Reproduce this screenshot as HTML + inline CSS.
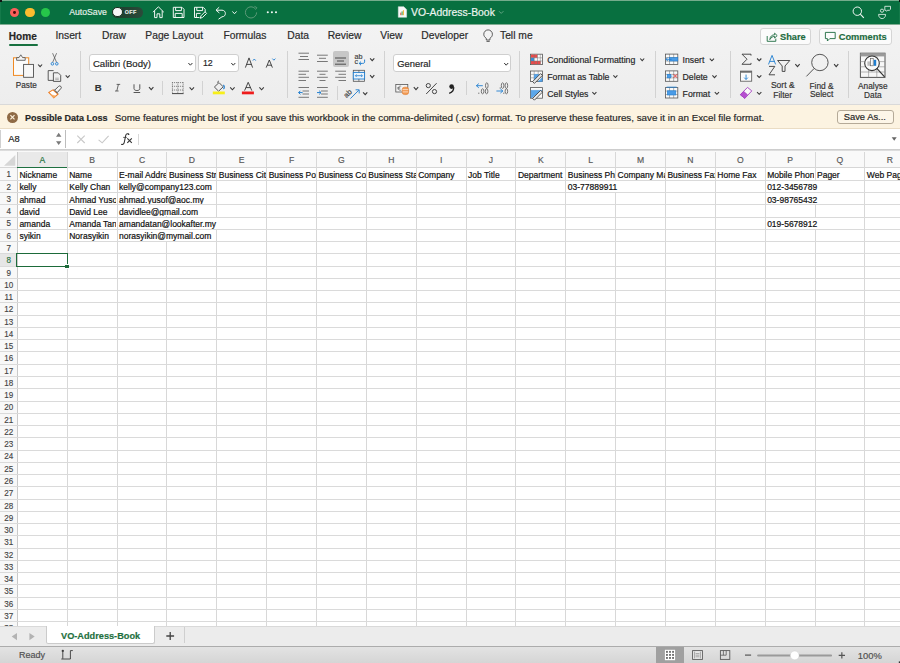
<!DOCTYPE html><html><head><meta charset="utf-8"><style>
*{margin:0;padding:0;box-sizing:border-box}
html,body{width:900px;height:663px;overflow:hidden;background:#fff;font-family:"Liberation Sans",sans-serif}
.a{position:absolute}
.t{position:absolute;white-space:nowrap;line-height:1;-webkit-text-stroke:0.18px currentColor}
svg{position:absolute;overflow:visible}
.cs{display:inline-block;vertical-align:top;background:#fff;height:11.06px;padding-top:2.5px;padding-right:1px;-webkit-text-stroke:0.2px #111}
</style></head><body>

<div class="a" style="left:0;top:0;width:900px;height:24px;background:#087040"></div>
<div class="a" style="left:0;top:24px;width:900px;height:1px;background:#80ac92"></div>
<div class="a" style="left:0;top:0;width:900px;height:1px;background:#74ac8c"></div>
<div class="a" style="left:0;top:1px;width:1px;height:23px;background:#147a4a"></div>
<div class="a" style="left:899px;top:1px;width:1px;height:23px;background:#147a4a"></div>
<div class="a" style="left:0;top:0;width:1.5px;height:1.5px;background:#111"></div>
<div class="a" style="left:898.5px;top:0;width:1.5px;height:1.5px;background:#111"></div>
<div class="a" style="left:9.8px;top:7.550000000000001px;width:9.7px;height:9.7px;border-radius:50%;background:#fc5f5a"></div>
<div class="a" style="left:25.049999999999997px;top:7.550000000000001px;width:9.7px;height:9.7px;border-radius:50%;background:#fdbc2f"></div>
<div class="a" style="left:40.65px;top:7.550000000000001px;width:9.7px;height:9.7px;border-radius:50%;background:#26c64a"></div>
<div class="a" style="left:13.2px;top:11px;width:2.8px;height:2.8px;border-radius:50%;background:#4a0a0a"></div>
<div class="a" style="left:0;top:25px;width:900px;height:79px;background:linear-gradient(#f3f3f3,#ededed)"></div>
<div class="a" style="left:0;top:103.5px;width:900px;height:1px;background:#d9d9d9"></div>
<div class="t" style="left:69.2px;top:8.14px;font-size:8.7px;color:#e3eee7;font-weight:normal;">AutoSave</div>
<div class="a" style="left:112.3px;top:7.2px;width:30.5px;height:10.5px;border-radius:5.25px;background:linear-gradient(90deg,#1a3d2b,#2b4a3a);"></div>
<div class="a" style="left:112.4px;top:7.3px;width:10.2px;height:10.2px;border-radius:50%;background:#f6f6f6;border:0.7px solid #15301f"></div>
<div class="t" style="left:124.8px;top:10.41px;font-size:5.3px;color:#e6ece8;font-weight:bold;letter-spacing:0.45px">OFF</div>
<div class="t" style="left:411.1px;top:7.50px;font-size:10.4px;color:#eef5f0;font-weight:normal;">VO-Address-Book</div>
<div class="t" style="left:8.8px;top:31.65px;font-size:10.1px;color:#262626;font-weight:bold;">Home</div>
<div class="a" style="left:8.8px;top:43.9px;width:28.9px;height:2px;background:#187140;border-radius:1px"></div>
<div class="t" style="left:55.4px;top:31.48px;font-size:10.3px;color:#2a2a2a;font-weight:normal;">Insert</div>
<div class="t" style="left:102px;top:31.48px;font-size:10.3px;color:#2a2a2a;font-weight:normal;">Draw</div>
<div class="t" style="left:145.3px;top:31.48px;font-size:10.3px;color:#2a2a2a;font-weight:normal;">Page Layout</div>
<div class="t" style="left:223.4px;top:31.48px;font-size:10.3px;color:#2a2a2a;font-weight:normal;">Formulas</div>
<div class="t" style="left:287.3px;top:31.48px;font-size:10.3px;color:#2a2a2a;font-weight:normal;">Data</div>
<div class="t" style="left:327.7px;top:31.48px;font-size:10.3px;color:#2a2a2a;font-weight:normal;">Review</div>
<div class="t" style="left:380.3px;top:31.48px;font-size:10.3px;color:#2a2a2a;font-weight:normal;">View</div>
<div class="t" style="left:421.3px;top:31.48px;font-size:10.3px;color:#2a2a2a;font-weight:normal;">Developer</div>
<div class="t" style="left:500px;top:31.48px;font-size:10.3px;color:#2a2a2a;font-weight:normal;">Tell me</div>
<div class="a" style="left:760.4px;top:27.9px;width:50.2px;height:17.5px;background:#fbfbfb;border:0.7px solid #d5d5d5;border-radius:3px"></div>
<div class="a" style="left:819px;top:27.9px;width:73px;height:17.5px;background:#fbfbfb;border:0.7px solid #d5d5d5;border-radius:3px"></div>
<div class="t" style="left:780px;top:33.37px;font-size:9.25px;color:#1d6b40;font-weight:bold;">Share</div>
<div class="t" style="left:838.7px;top:33.33px;font-size:9.3px;color:#1d6b40;font-weight:bold;">Comments</div>
<div class="t" style="left:15.8px;top:82.26px;font-size:8.2px;color:#333;font-weight:normal;">Paste</div>
<div class="a" style="left:80.2px;top:51px;width:1px;height:47px;background:#d2d2d2"></div>
<div class="a" style="left:88.6px;top:54.4px;width:107.4px;height:18px;background:#fff;border:0.7px solid #cfcfcf;border-radius:3px"></div>
<div class="a" style="left:198.4px;top:54.4px;width:40.6px;height:18px;background:#fff;border:0.7px solid #cfcfcf;border-radius:3px"></div>
<div class="t" style="left:92.9px;top:58.57px;font-size:9.6px;color:#262626;font-weight:normal;">Calibri (Body)</div>
<div class="t" style="left:202.9px;top:59.25px;font-size:8.8px;color:#262626;font-weight:normal;">12</div>
<div class="t" style="left:94.7px;top:82.97px;font-size:9.6px;color:#333;font-weight:bold;">B</div>
<div class="a" style="left:162.0px;top:81px;width:1px;height:14px;background:#d2d2d2"></div>
<div class="a" style="left:202.3px;top:81px;width:1px;height:14px;background:#d2d2d2"></div>
<div class="a" style="left:286.9px;top:51px;width:1px;height:47px;background:#d2d2d2"></div>
<div class="a" style="left:332.5px;top:51px;width:16.3px;height:15.7px;background:#c7c7c7;border-radius:2px"></div>
<div class="t" style="left:354.4px;top:52.71px;font-size:7.2px;color:#444;font-weight:normal;">ab</div>
<div class="t" style="left:354.4px;top:58.31px;font-size:7.2px;color:#444;font-weight:normal;">c</div>
<div class="a" style="left:337.0px;top:86px;width:1px;height:14px;background:#d2d2d2"></div>
<div class="t" style="left:345.6px;top:90.94px;font-size:7.4px;color:#444;font-weight:normal;transform:rotate(-45deg);transform-origin:20% 80%">ab</div>
<div class="a" style="left:384.0px;top:51px;width:1px;height:47px;background:#d2d2d2"></div>
<div class="a" style="left:393.3px;top:54.3px;width:118.2px;height:18.2px;background:#fff;border:0.7px solid #cfcfcf;border-radius:3px"></div>
<div class="t" style="left:397.3px;top:58.84px;font-size:9.4px;color:#262626;font-weight:normal;">General</div>
<div class="a" style="left:466.1px;top:81px;width:1px;height:14px;background:#d2d2d2"></div>
<div class="a" style="left:519.4px;top:51px;width:1px;height:47px;background:#d2d2d2"></div>
<div class="t" style="left:547.3px;top:55.89px;font-size:8.75px;color:#262626;font-weight:normal;">Conditional Formatting</div>
<div class="t" style="left:547.3px;top:72.74px;font-size:8.7px;color:#262626;font-weight:normal;">Format as Table</div>
<div class="t" style="left:547.3px;top:89.54px;font-size:8.7px;color:#262626;font-weight:normal;">Cell Styles</div>
<div class="a" style="left:655.1px;top:51px;width:1px;height:47px;background:#d2d2d2"></div>
<div class="t" style="left:682.6px;top:55.94px;font-size:8.7px;color:#262626;font-weight:normal;">Insert</div>
<div class="t" style="left:682.6px;top:72.74px;font-size:8.7px;color:#262626;font-weight:normal;">Delete</div>
<div class="t" style="left:682.6px;top:89.54px;font-size:8.7px;color:#262626;font-weight:normal;">Format</div>
<div class="a" style="left:729.9px;top:51px;width:1px;height:47px;background:#d2d2d2"></div>
<div class="t" style="left:742.75px;width:80px;text-align:center;top:81.40px;font-size:8.5px;color:#333;font-weight:normal">Sort &amp;</div>
<div class="t" style="left:742.65px;width:80px;text-align:center;top:90.70px;font-size:8.5px;color:#333;font-weight:normal">Filter</div>
<div class="t" style="left:781.60px;width:80px;text-align:center;top:81.69px;font-size:8.4px;color:#333;font-weight:normal">Find &amp;</div>
<div class="t" style="left:781.60px;width:80px;text-align:center;top:90.49px;font-size:8.4px;color:#333;font-weight:normal">Select</div>
<div class="a" style="left:848.0px;top:51px;width:1px;height:47px;background:#d2d2d2"></div>
<div class="t" style="left:832.80px;width:80px;text-align:center;top:81.77px;font-size:8.3px;color:#333;font-weight:normal">Analyse</div>
<div class="t" style="left:832.80px;width:80px;text-align:center;top:90.57px;font-size:8.3px;color:#333;font-weight:normal">Data</div>
<svg width="900" height="663" style="left:0;top:0"><path d="M153,12.2 L158.4,6.8 L163.8,12.2 M154.6,10.8 V17.6 H157 V13.8 H159.8 V17.6 H162.2 V10.8" stroke="#f2f7f4" stroke-width="1.0" fill="none" /><path d="M173.3,7.3 H182 L184,9.3 V17.5 H173.3 Z M175.6,7.3 V10.6 H181.4 V7.3 M175.2,17.5 V13.4 H182.2 V17.5" stroke="#f2f7f4" stroke-width="1.0" fill="none" /><path d="M194.5,7.3 H203.2 L205.2,9.3 V12 M194.5,7.3 V17.5 H199.5 M196.8,7.3 V10.6 H202.6 V7.3 M196.4,17.5 V13.4 H200.6" stroke="#f2f7f4" stroke-width="1.0" fill="none" /><path d="M200.2,18.3 L201,15.8 L205,11.8 L206.6,13.4 L202.6,17.4 Z" stroke="#f2f7f4" stroke-width="1.0" fill="none" /><path d="M219.2,7.2 L216,10.2 L219.4,13 M216.2,10.2 H222 C226.5,10.2 226.5,16.8 222,16.8 L218.5,19.2" stroke="#f2f7f4" stroke-width="1.0" fill="none" /><path d="M232.40,11.45 L234.50,13.75 L236.60,11.45" stroke="#f2f7f4" stroke-width="1.0" fill="none" /><circle cx="251" cy="12.4" r="5.6" stroke="#5c9a78" stroke-width="1" fill="none" stroke-dasharray="30 6"/><path d="M254.5,6.4 L256.8,7.6 L255.5,9.6" stroke="#5c9a78" stroke-width="1.0" fill="none" /><circle cx="267.8" cy="12.3" r="1.05" fill="#f2f7f4"/><circle cx="271.9" cy="12.3" r="1.05" fill="#f2f7f4"/><circle cx="276" cy="12.3" r="1.05" fill="#f2f7f4"/><path d="M398.3,6.7 H403.8 L406.6,9.5 V17.3 H398.3 Z" stroke="#e8e8e8" stroke-width="0.5" fill="#f8f8f8" /><rect x="400.3" y="12.6" width="1" height="2.6" fill="#e14b3b"/><rect x="401.6" y="11.4" width="1" height="3.8" fill="#2f9a4f"/><rect x="402.9" y="10.2" width="1" height="5" fill="#f2b42f"/><path d="M499.00,11.20 L501.20,13.40 L503.40,11.20" stroke="#6aa887" stroke-width="0.9" fill="none" /><circle cx="857.3" cy="11.2" r="4.2" stroke="#f2f7f4" stroke-width="1" fill="none"/><line x1="860.3" y1="14.2" x2="863.8" y2="17.8" stroke="#f2f7f4" stroke-width="1.1"/><circle cx="882" cy="10.7" r="1.6" stroke="#f2f7f4" stroke-width="0.8" fill="none"/><path d="M878.6,14.4 H885.6 C885.6,17.4 883.6,18.6 882.1,18.6 C880.6,18.6 878.6,17.4 878.6,14.4 Z" stroke="#f2f7f4" stroke-width="0.8" fill="none" /><path d="M884.8,6.3 H890.5 V9.3 L889.4,10.3 H887.3 L886.6,11.3 L885.9,10.3 H884.8 Z" stroke="#f2f7f4" stroke-width="0.8" fill="none" /><path d="M486.3,38.4 C484.3,37 483.8,35.6 483.8,34.2 A4.3,4.3 0 0 1 492.4,34.2 C492.4,35.6 491.9,37 489.9,38.4 V40 H486.3 Z M486.5,41.4 H489.7" stroke="#4a4a4a" stroke-width="0.9" fill="none" /><path d="M767.2,36 V41.3 H775.8 V38.6 M769.8,39.6 C770.2,36.2 772,34.8 774.6,34.8 V33.2 L777.2,35.6 L774.6,38 V36.4 C772.6,36.4 771.2,37.4 769.8,39.6 Z" stroke="#1d6b40" stroke-width="0.9" fill="none" /><path d="M825.4,32.4 H835.2 V38.6 H829.8 L827.4,41 V38.6 H825.4 Z" stroke="#1d6b40" stroke-width="0.9" fill="none" /><rect x="13.5" y="57.8" width="15.2" height="17.6" fill="#fbfbfb" stroke="#f08a24" stroke-width="1.0" rx="0"/><path d="M16.6,60.3 V57.6 H19 L20.8,54.8 L22.6,57.6 H25.2 V60.3 Z" stroke="#4a4a4a" stroke-width="0.8" fill="#f5f5f5" /><rect x="23.6" y="64.4" width="9.9" height="12.9" fill="#f7f7f7" stroke="#505050" stroke-width="0.9" rx="0"/><path d="M38.10,64.50 L40.10,66.70 L42.10,64.50" stroke="#3a3a3a" stroke-width="1.1" fill="none" /><path d="M52.6,53.2 L56.5,62.2 M56.6,53.2 L52.7,62.2" stroke="#4a4a4a" stroke-width="0.7" fill="none" /><circle cx="52.4" cy="63.8" r="1.3" stroke="#1f7ed0" stroke-width="0.9" fill="none"/><circle cx="56.8" cy="63.8" r="1.3" stroke="#1f7ed0" stroke-width="0.9" fill="none"/><path d="M53.5,80.4 H48.2 V70.6 H53.6" stroke="#4a4a4a" stroke-width="0.9" fill="none" /><path d="M53.4,72.8 H58.2 L60.7,75.3 V81.4 H53.4 Z" stroke="#4a4a4a" stroke-width="0.9" fill="none" /><line x1="55.2" y1="78.2" x2="58.8" y2="78.2" stroke="#9a9a9a" stroke-width="0.7"/><line x1="55.2" y1="79.6" x2="58.8" y2="79.6" stroke="#9a9a9a" stroke-width="0.7"/><path d="M65.70,75.30 L67.70,77.50 L69.70,75.30" stroke="#3a3a3a" stroke-width="1.1" fill="none" /><path d="M48.8,92.4 L53,89.9 L57.9,94.2 L53.8,97.8 Z" stroke="#ef7d22" stroke-width="1.1" fill="#fff" /><path d="M50.6,94.6 L55.8,96 L53.8,97.8 Z" stroke="#f6a860" stroke-width="0.5" fill="#f6a860" /><path d="M54.2,89.6 L58.2,93.8" stroke="#333" stroke-width="1.0" fill="none" stroke-dasharray="1 0.8"/><path d="M54.6,90.2 L58.6,86.4 A1.5,1.5 0 0 1 60.8,88.6 L57.2,92.6 Z" stroke="#444" stroke-width="0.9" fill="#f4f4f4" /><path d="M188.40,63.00 L190.40,65.20 L192.40,63.00" stroke="#333" stroke-width="1.0" fill="none" /><path d="M231.30,63.00 L233.30,65.20 L235.30,63.00" stroke="#333" stroke-width="1.0" fill="none" /><path d="M245.4,67.6 L249,57.9 L252.6,67.6 M246.6,64.4 H251.4" stroke="#333" stroke-width="0.9" fill="none" /><path d="M252.9,60.6 L254.3,59 L255.7,60.6" stroke="#1f7ed0" stroke-width="0.9" fill="none" /><path d="M266.2,67.6 L269.3,60 L272.4,67.6 M267.2,65.2 H271.4" stroke="#333" stroke-width="0.9" fill="none" /><path d="M272.4,58.6 L273.9,60.2 L275.4,58.6" stroke="#1f7ed0" stroke-width="0.9" fill="none" /><path d="M116.6,84.4 H120.2 M115,91 H118.6 M118.4,84.4 L116.8,91" stroke="#444" stroke-width="0.8" fill="none" /><path d="M134,84.3 V88.6 C134,91.2 139.8,91.2 139.8,88.6 V84.3 M133.6,92.5 H140.2" stroke="#444" stroke-width="0.9" fill="none" /><path d="M149.00,87.20 L151.20,89.60 L153.40,87.20" stroke="#3a3a3a" stroke-width="1.1" fill="none" /><line x1="172" y1="82.6" x2="183.6" y2="82.6" stroke="#666" stroke-width="0.8" stroke-dasharray="1.1 0.9"/><line x1="172" y1="86.3" x2="183.6" y2="86.3" stroke="#666" stroke-width="0.8" stroke-dasharray="1.1 0.9"/><line x1="172" y1="90" x2="183.6" y2="90" stroke="#666" stroke-width="0.8" stroke-dasharray="1.1 0.9"/><line x1="172.4" y1="82.3" x2="172.4" y2="93" stroke="#666" stroke-width="0.8" stroke-dasharray="1.1 0.9"/><line x1="177.8" y1="82.3" x2="177.8" y2="93" stroke="#666" stroke-width="0.8" stroke-dasharray="1.1 0.9"/><line x1="183.2" y1="82.3" x2="183.2" y2="93" stroke="#666" stroke-width="0.8" stroke-dasharray="1.1 0.9"/><line x1="172" y1="93.6" x2="183.6" y2="93.6" stroke="#444" stroke-width="1.0"/><path d="M189.60,87.40 L191.80,89.80 L194.00,87.40" stroke="#3a3a3a" stroke-width="1.1" fill="none" /><path d="M214.4,87 L219,82.6 L223.2,86.8 L218.6,91.2 Z" stroke="#444" stroke-width="0.9" fill="none" /><path d="M217,82.6 L219,80.8" stroke="#444" stroke-width="0.8" fill="none" /><path d="M223.4,84.8 C224.6,86 224.6,88 223.4,89" stroke="#1f7ed0" stroke-width="1.2" fill="none" /><rect x="212.8" y="91.5" width="12" height="2.8" fill="#f7ef1a" stroke="none" stroke-width="0.9" rx="0"/><path d="M230.20,87.40 L232.40,89.80 L234.60,87.40" stroke="#3a3a3a" stroke-width="1.1" fill="none" /><path d="M244.6,90.6 L248.2,82.3 L251.8,90.6 M245.9,87.6 H250.5" stroke="#333" stroke-width="0.9" fill="none" /><rect x="241.9" y="91.5" width="12" height="2.8" fill="#ee1c1c" stroke="none" stroke-width="0.9" rx="0"/><path d="M259.40,87.40 L261.60,89.80 L263.80,87.40" stroke="#3a3a3a" stroke-width="1.1" fill="none" /><line x1="298.5" y1="53.2" x2="309" y2="53.2" stroke="#505050" stroke-width="0.75"/><line x1="300" y1="56.5" x2="308" y2="56.5" stroke="#505050" stroke-width="0.75"/><line x1="298.5" y1="59.5" x2="309" y2="59.5" stroke="#505050" stroke-width="0.75"/><line x1="317" y1="55.2" x2="327.8" y2="55.2" stroke="#505050" stroke-width="0.75"/><line x1="319" y1="58.3" x2="326" y2="58.3" stroke="#505050" stroke-width="0.75"/><line x1="317" y1="61.5" x2="327.8" y2="61.5" stroke="#505050" stroke-width="0.75"/><line x1="335" y1="58" x2="346" y2="58" stroke="#3d3d3d" stroke-width="0.9"/><line x1="337" y1="61" x2="344" y2="61" stroke="#3d3d3d" stroke-width="0.9"/><line x1="335" y1="64.2" x2="346" y2="64.2" stroke="#3d3d3d" stroke-width="0.9"/><path d="M364.6,59.6 V61.8 C364.6,63 363.8,63.4 362.6,63.4 H359.2 M361,61.6 L359.2,63.4 L361,65.2" stroke="#1f7ed0" stroke-width="1.0" fill="none" /><path d="M370.10,58.30 L372.20,60.70 L374.30,58.30" stroke="#3a3a3a" stroke-width="1.1" fill="none" /><line x1="298.5" y1="71.2" x2="309" y2="71.2" stroke="#505050" stroke-width="0.75"/><line x1="298.5" y1="74.3" x2="306" y2="74.3" stroke="#505050" stroke-width="0.75"/><line x1="298.5" y1="77.3" x2="309" y2="77.3" stroke="#505050" stroke-width="0.75"/><line x1="298.5" y1="80.5" x2="306" y2="80.5" stroke="#505050" stroke-width="0.75"/><line x1="317" y1="71.2" x2="327.8" y2="71.2" stroke="#505050" stroke-width="0.75"/><line x1="319.5" y1="74.3" x2="325.5" y2="74.3" stroke="#505050" stroke-width="0.75"/><line x1="317" y1="77.3" x2="327.8" y2="77.3" stroke="#505050" stroke-width="0.75"/><line x1="319.5" y1="80.5" x2="325.5" y2="80.5" stroke="#505050" stroke-width="0.75"/><line x1="335.2" y1="71.2" x2="346" y2="71.2" stroke="#505050" stroke-width="0.75"/><line x1="338.5" y1="74.3" x2="346" y2="74.3" stroke="#505050" stroke-width="0.75"/><line x1="335.2" y1="77.3" x2="346" y2="77.3" stroke="#505050" stroke-width="0.75"/><line x1="338.5" y1="80.5" x2="346" y2="80.5" stroke="#505050" stroke-width="0.75"/><rect x="353.3" y="70.3" width="11.3" height="11" fill="none" stroke="#555" stroke-width="0.8" rx="0"/><rect x="353.3" y="72.4" width="11.3" height="6.6" fill="#eaf3fb" stroke="#1f7ed0" stroke-width="0.9" rx="0"/><line x1="358.9" y1="70.3" x2="358.9" y2="72.4" stroke="#555" stroke-width="0.7"/><line x1="358.9" y1="79" x2="358.9" y2="81.3" stroke="#555" stroke-width="0.7"/><path d="M355.4,75.7 H362.4 M356.6,74.5 L355.4,75.7 L356.6,76.9 M361.2,74.5 L362.4,75.7 L361.2,76.9" stroke="#1f7ed0" stroke-width="0.8" fill="none" /><path d="M370.10,75.20 L372.20,77.60 L374.30,75.20" stroke="#3a3a3a" stroke-width="1.1" fill="none" /><line x1="298.5" y1="87.5" x2="309" y2="87.5" stroke="#505050" stroke-width="0.75"/><line x1="302.5" y1="91" x2="309" y2="91" stroke="#505050" stroke-width="0.75"/><line x1="302.5" y1="94" x2="309" y2="94" stroke="#505050" stroke-width="0.75"/><line x1="298.5" y1="97.3" x2="309" y2="97.3" stroke="#505050" stroke-width="0.75"/><path d="M298.6,92.6 H302.6 M300.4,90.8 L298.6,92.6 L300.4,94.4" stroke="#1f7ed0" stroke-width="1.0" fill="none" /><line x1="317" y1="87.5" x2="327.8" y2="87.5" stroke="#505050" stroke-width="0.75"/><line x1="321" y1="91" x2="327.8" y2="91" stroke="#505050" stroke-width="0.75"/><line x1="321" y1="94" x2="327.8" y2="94" stroke="#505050" stroke-width="0.75"/><line x1="317" y1="97.3" x2="327.8" y2="97.3" stroke="#505050" stroke-width="0.75"/><path d="M317,92.6 H321 M319.2,90.8 L321,92.6 L319.2,94.4" stroke="#1f7ed0" stroke-width="1.0" fill="none" /><path d="M350.4,98.6 L358.8,90.2 M355.6,89.8 H359.2 V93.4" stroke="#1f7ed0" stroke-width="0.9" fill="none" /><path d="M363.10,92.30 L365.20,94.70 L367.30,92.30" stroke="#3a3a3a" stroke-width="1.1" fill="none" /><path d="M504.20,63.00 L506.20,65.20 L508.20,63.00" stroke="#333" stroke-width="1.0" fill="none" /><rect x="395.8" y="84.4" width="12" height="7.6" fill="#f4f4f4" stroke="#555" stroke-width="0.8" rx="0"/><path d="M401.2,86.2 C399.6,85.6 398.2,86.6 398.2,88.2 C398.2,89.8 399.6,90.8 401.2,90.2 M397.4,87.6 H400.2 M397.4,88.8 H400.2" stroke="#555" stroke-width="0.6" fill="none" /><rect x="402.2" y="87.2" width="6.4" height="7.4" rx="2.4" fill="#f29a52" stroke="#e0782a" stroke-width="0.6"/><line x1="402.6" y1="89.6" x2="408.2" y2="89.6" stroke="#fff" stroke-width="0.6"/><line x1="402.6" y1="91.9" x2="408.2" y2="91.9" stroke="#fff" stroke-width="0.6"/><path d="M413.80,87.20 L416.00,89.60 L418.20,87.20" stroke="#3a3a3a" stroke-width="1.1" fill="none" /><path d="M426.2,94 L436.6,83.2" stroke="#333" stroke-width="0.9" fill="none" /><circle cx="428.3" cy="85.6" r="2.1" stroke="#333" stroke-width="0.9" fill="none"/><circle cx="434.5" cy="91.6" r="2.1" stroke="#333" stroke-width="0.9" fill="none"/><circle cx="451.6" cy="86.6" r="2.3" fill="#222"/><path d="M453.6,87.2 C454,90.2 452.2,92.4 449.2,93.4" stroke="#222" stroke-width="1.4" fill="none" /><path d="M476.4,85.7 H482.8 M478.8,83.6 L476.4,85.7 L478.8,87.8" stroke="#1f7ed0" stroke-width="0.9" fill="none" /><ellipse cx="486.8" cy="85.6" rx="1.3" ry="2.8" stroke="#555" stroke-width="0.8" fill="none"/><rect x="478.3" y="92.7" width="1" height="1" fill="#555"/><ellipse cx="482.6" cy="91.3" rx="1.3" ry="2.5" stroke="#555" stroke-width="0.8" fill="none"/><ellipse cx="486.6" cy="91.3" rx="1.3" ry="2.5" stroke="#555" stroke-width="0.8" fill="none"/><rect x="499.7" y="87.5" width="1" height="1" fill="#555"/><ellipse cx="502.6" cy="85.6" rx="1.3" ry="2.8" stroke="#555" stroke-width="0.8" fill="none"/><ellipse cx="506.4" cy="85.6" rx="1.3" ry="2.8" stroke="#555" stroke-width="0.8" fill="none"/><path d="M496.4,91 H502.8 M500.4,88.9 L502.8,91 L500.4,93.1" stroke="#1f7ed0" stroke-width="0.9" fill="none" /><rect x="503.3" y="92.7" width="1" height="1" fill="#555"/><ellipse cx="506.4" cy="91.3" rx="1.3" ry="2.5" stroke="#555" stroke-width="0.8" fill="none"/><rect x="530.6" y="54.2" width="11.8" height="10.4" fill="#fafafa" stroke="#555" stroke-width="0.8" rx="0"/><rect x="531" y="54.6" width="6.4" height="3.2" fill="#ec4a4a" stroke="none" stroke-width="0.9" rx="0"/><rect x="531" y="57.8" width="3.2" height="3.2" fill="#2f8fdd" stroke="none" stroke-width="0.9" rx="0"/><rect x="531" y="61" width="9.6" height="3.2" fill="#ec4a4a" stroke="none" stroke-width="0.9" rx="0"/><line x1="530.6" y1="57.8" x2="542.4" y2="57.8" stroke="#777" stroke-width="0.5"/><line x1="530.6" y1="61" x2="542.4" y2="61" stroke="#777" stroke-width="0.5"/><line x1="534.2" y1="54.2" x2="534.2" y2="64.6" stroke="#777" stroke-width="0.5"/><line x1="537.5" y1="54.2" x2="537.5" y2="64.6" stroke="#777" stroke-width="0.5"/><line x1="540.3" y1="54.2" x2="540.3" y2="64.6" stroke="#777" stroke-width="0.5"/><path d="M640.20,58.50 L642.20,60.70 L644.20,58.50" stroke="#3a3a3a" stroke-width="1.1" fill="none" /><rect x="530.6" y="71" width="11.8" height="10.4" fill="#fafafa" stroke="#555" stroke-width="0.8" rx="0"/><line x1="530.6" y1="74.4" x2="542.4" y2="74.4" stroke="#777" stroke-width="0.5"/><line x1="530.6" y1="77.8" x2="542.4" y2="77.8" stroke="#777" stroke-width="0.5"/><line x1="534.2" y1="71" x2="534.2" y2="81.4" stroke="#777" stroke-width="0.5"/><line x1="538.2" y1="71" x2="538.2" y2="81.4" stroke="#777" stroke-width="0.5"/><path d="M534.4,74.6 H538.6 L534.4,81.2 Z" stroke="#3b8fdc" stroke-width="0.6" fill="#5aa6ea" /><path d="M532.6,81.6 L540.6,73.6 L542.4,75.4 L534.4,83.4 Z" stroke="#333" stroke-width="0.8" fill="#e8e8e8" /><path d="M538.4,81.4 H542.2 V77.8 Z" stroke="#3b8fdc" stroke-width="0.6" fill="#5aa6ea" /><path d="M613.40,75.30 L615.40,77.50 L617.40,75.30" stroke="#3a3a3a" stroke-width="1.1" fill="none" /><rect x="530.6" y="87.6" width="11.8" height="10.6" fill="#fafafa" stroke="#555" stroke-width="0.8" rx="0"/><path d="M531.2,90.4 H541.8 L531.2,98 Z" stroke="#3b8fdc" stroke-width="0.6" fill="#5aa6ea" /><path d="M532.6,98.4 L540.6,90.4 L542.4,92.2 L534.4,100.2 Z" stroke="#333" stroke-width="0.8" fill="#e8e8e8" /><path d="M592.40,92.10 L594.40,94.30 L596.40,92.10" stroke="#3a3a3a" stroke-width="1.1" fill="none" /><rect x="665.4" y="54.1" width="12.4" height="10.4" fill="#fafafa" stroke="#555" stroke-width="0.8" rx="0"/><line x1="665.4" y1="57.56666666666667" x2="677.8" y2="57.56666666666667" stroke="#666" stroke-width="0.5"/><line x1="669.5333333333333" y1="54.1" x2="669.5333333333333" y2="64.5" stroke="#666" stroke-width="0.5"/><line x1="665.4" y1="61.03333333333333" x2="677.8" y2="61.03333333333333" stroke="#666" stroke-width="0.5"/><line x1="673.6666666666666" y1="54.1" x2="673.6666666666666" y2="64.5" stroke="#666" stroke-width="0.5"/><path d="M709.80,58.60 L711.90,60.80 L714.00,58.60" stroke="#3a3a3a" stroke-width="1.1" fill="none" /><rect x="665.4" y="70.9" width="12.4" height="10.4" fill="#fafafa" stroke="#555" stroke-width="0.8" rx="0"/><line x1="665.4" y1="74.36666666666667" x2="677.8" y2="74.36666666666667" stroke="#666" stroke-width="0.5"/><line x1="669.5333333333333" y1="70.9" x2="669.5333333333333" y2="81.30000000000001" stroke="#666" stroke-width="0.5"/><line x1="665.4" y1="77.83333333333334" x2="677.8" y2="77.83333333333334" stroke="#666" stroke-width="0.5"/><line x1="673.6666666666666" y1="70.9" x2="673.6666666666666" y2="81.30000000000001" stroke="#666" stroke-width="0.5"/><path d="M712.40,75.40 L714.50,77.60 L716.60,75.40" stroke="#3a3a3a" stroke-width="1.1" fill="none" /><rect x="665.4" y="87.6" width="12.4" height="10.4" fill="#fafafa" stroke="#555" stroke-width="0.8" rx="0"/><line x1="665.4" y1="91.06666666666666" x2="677.8" y2="91.06666666666666" stroke="#666" stroke-width="0.5"/><line x1="669.5333333333333" y1="87.6" x2="669.5333333333333" y2="98.0" stroke="#666" stroke-width="0.5"/><line x1="665.4" y1="94.53333333333333" x2="677.8" y2="94.53333333333333" stroke="#666" stroke-width="0.5"/><line x1="673.6666666666666" y1="87.6" x2="673.6666666666666" y2="98.0" stroke="#666" stroke-width="0.5"/><path d="M714.80,92.10 L716.90,94.30 L719.00,92.10" stroke="#3a3a3a" stroke-width="1.1" fill="none" /><rect x="669.6" y="57.6" width="8.2" height="3.4" fill="#4a9be6" stroke="#1f7ed0" stroke-width="0.6" rx="0"/><path d="M666,59.3 H671.6 M667.8,57.5 L666,59.3 L667.8,61.1" stroke="#1f7ed0" stroke-width="0.9" fill="none" /><rect x="667.2" y="74.3" width="3.6" height="3.6" fill="#4a9be6" stroke="#1f7ed0" stroke-width="0.6" rx="0"/><path d="M670.8,76.1 L672.4,76.1" stroke="#1f7ed0" stroke-width="0.8" fill="none" /><path d="M673.6,74.2 L677.2,77.8 M677.2,74.2 L673.6,77.8" stroke="#e63b3b" stroke-width="1.0" fill="none" /><rect x="667.4" y="90.8" width="8.4" height="4.2" fill="#4a9be6" stroke="#1f7ed0" stroke-width="0.6" rx="0"/><line x1="666.6" y1="87.2" x2="676.6" y2="87.2" stroke="#1f7ed0" stroke-width="0.9"/><path d="M751,55.6 V54.2 H742 L747,59.2 L742,64.3 H751 V62.9" stroke="#3a3a3a" stroke-width="0.9" fill="none" /><path d="M757.05,58.50 L759.20,60.70 L761.35,58.50" stroke="#3a3a3a" stroke-width="1.1" fill="none" /><rect x="740.4" y="71.1" width="11.3" height="10.1" fill="#fafafa" stroke="#555" stroke-width="0.8" rx="0"/><rect x="740.4" y="71.1" width="11.3" height="1.6" fill="#666" stroke="none" stroke-width="0.9" rx="0"/><path d="M746.05,74.6 V79.4 M744.2,77.6 L746.05,79.5 L747.9,77.6" stroke="#1f7ed0" stroke-width="0.9" fill="none" /><path d="M757.05,75.30 L759.20,77.50 L761.35,75.30" stroke="#3a3a3a" stroke-width="1.1" fill="none" /><path d="M740.3,94.7 L747.5,87.4 L751.8,90.9 L744.8,98.4 Z" stroke="#a43fbf" stroke-width="0.9" fill="#fafafa" /><path d="M740.3,94.7 L743.6,91.3 L747.4,94.6 L744.8,98.4 Z" stroke="#a43fbf" stroke-width="0.6" fill="#b54fd0" /><path d="M757.05,92.10 L759.20,94.30 L761.35,92.10" stroke="#3a3a3a" stroke-width="1.1" fill="none" /><path d="M768.5,64.4 L772.05,55.4 L775.6,64.4 M769.6,61.4 H774.5" stroke="#1f7ed0" stroke-width="0.9" fill="none" /><path d="M769,66.4 H774.8 L769,74.8 H775" stroke="#3a3a3a" stroke-width="0.9" fill="none" /><path d="M777.6,60.5 H789.8 L785,66 V71.4 H782.2 V66 Z" stroke="#3a3a3a" stroke-width="0.9" fill="none" /><path d="M795.35,64.20 L797.50,66.60 L799.65,64.20" stroke="#3a3a3a" stroke-width="1.1" fill="none" /><circle cx="819.9" cy="62.5" r="8.2" stroke="#444" stroke-width="0.9" fill="none"/><line x1="814.2" y1="68.4" x2="806.4" y2="76.4" stroke="#444" stroke-width="0.9"/><path d="M834.10,64.20 L836.20,66.60 L838.30,64.20" stroke="#3a3a3a" stroke-width="1.1" fill="none" /><rect x="860.4" y="53.2" width="24.6" height="24.2" fill="#f7f7f7" stroke="#555" stroke-width="1.0" rx="0"/><rect x="860.4" y="53.2" width="24.6" height="3.2" fill="#9a9a9a" stroke="none" stroke-width="0.9" rx="0"/><line x1="868.6" y1="56.4" x2="868.6" y2="77.4" stroke="#888" stroke-width="0.6"/><line x1="876.8" y1="56.4" x2="876.8" y2="77.4" stroke="#888" stroke-width="0.6"/><line x1="860.4" y1="61.6" x2="885" y2="61.6" stroke="#888" stroke-width="0.6"/><line x1="860.4" y1="66.8" x2="885" y2="66.8" stroke="#888" stroke-width="0.6"/><line x1="860.4" y1="72.0" x2="885" y2="72.0" stroke="#888" stroke-width="0.6"/><circle cx="872" cy="63.3" r="7.3" stroke="#333" stroke-width="1.1" fill="#fafafa"/><rect x="867.4" y="61.4" width="2.8" height="4.4" fill="#bdbdbd" stroke="none" stroke-width="0.9" rx="0"/><rect x="870.6" y="58.6" width="2.6" height="7.2" fill="#fafafa" stroke="#555" stroke-width="0.6" rx="0"/><rect x="873.8" y="59.8" width="2.4" height="6" fill="#1f7ed0" stroke="none" stroke-width="0.9" rx="0"/><line x1="876.8" y1="68.4" x2="884.6" y2="76.8" stroke="#333" stroke-width="1.2"/></svg>
<div class="a" style="left:0;top:104.5px;width:900px;height:24px;background:#fcf3e1"></div>
<div class="a" style="left:0;top:128px;width:900px;height:1px;background:#eadcc4"></div>
<div class="a" style="left:0;top:129px;width:900px;height:20px;background:#fff"></div>
<div class="a" style="left:0;top:148.5px;width:900px;height:2.5px;background:linear-gradient(#c6c6c6,#e4e4e4)"></div>
<div class="a" style="left:7px;top:111.8px;width:10.9px;height:10.9px;border-radius:50%;background:#8f6a45"></div>
<svg width="900" height="663" style="left:0;top:0"><path d="M10.4,115.2 L14.5,119.3 M14.5,115.2 L10.4,119.3" stroke="#fcefd9" stroke-width="1.2"/></svg>
<div class="t" style="left:24.9px;top:113.9815px;font-size:9px;color:#262626;font-weight:bold;">Possible Data Loss</div>
<div class="t" style="left:114.7px;top:113.3043px;font-size:9.8px;color:#262626;font-weight:normal;">Some features might be lost if you save this workbook in the comma-delimited (.csv) format. To preserve these features, save it in an Excel file format.</div>
<div class="a" style="left:836.7px;top:110.4px;width:56.9px;height:13.2px;border:0.8px solid #b5aa98;border-radius:3px;background:#fdf6e8"></div>
<div class="t" style="left:843.7px;top:112.3429px;font-size:9.4px;color:#262626;font-weight:normal;">Save As...</div>
<div class="a" style="left:0px;top:129.5px;width:65.5px;height:18.6px;border-right:1px solid #bdbdbd;border-left:1px solid #d0d0d0;background:#fff"></div>
<div class="t" style="left:8.2px;top:134.72755px;font-size:9.3px;color:#222;font-weight:normal;">A8</div>
<svg width="900" height="663" style="left:0;top:0"><path d="M56,136.7 L58.7,132.8 L61.4,136.7 Z M56,141.2 L58.7,145.1 L61.4,141.2 Z" fill="#7a7a7a"/><path d="M77.3,135.6 L84.7,143 M84.7,135.6 L77.3,143" stroke="#c8c8c8" stroke-width="1.1"/><path d="M98.6,139.8 L102.2,142.8 L108.6,135.8" stroke="#c8c8c8" stroke-width="1.1" fill="none"/><path d="M891.7,137.3 L896.7,137.3 L894.2,140.7 Z" fill="#666"/></svg>
<svg width="900" height="663" style="left:0;top:0"><path d="M128.9,134.6 C128.4,133.2 126.4,133.4 125.8,135.2 L124.2,142.6 C123.8,144.4 122.4,144.8 121.2,144.3" stroke="#333" stroke-width="1.05" fill="none"/><path d="M123.2,137.4 H126.8" stroke="#333" stroke-width="0.8"/><circle cx="128.6" cy="134.3" r="0.75" fill="#333"/><path d="M127.3,138.3 L131.8,142.8 M131.8,138.3 L127.3,142.8" stroke="#333" stroke-width="1.1"/></svg>
<div class="a" style="left:138px;top:133.8px;width:1px;height:11px;background:#d8d8d8"></div>
<div class="a" style="left:0;top:151px;width:900px;height:17px;background:#f9f9f9"></div>
<div class="a" style="left:0;top:167px;width:900px;height:1px;background:#d6d6d6"></div>
<div class="a" style="left:0;top:168px;width:17.4px;height:458px;background:#f8f8f8"></div>
<div class="a" style="left:17px;top:151.5px;width:1px;height:475px;background:#c9c9c9"></div>
<div class="a" style="left:66.75px;top:151.5px;width:1px;height:475px;background:#d8d8d8"></div>
<div class="a" style="left:116.60px;top:151.5px;width:1px;height:475px;background:#d8d8d8"></div>
<div class="a" style="left:166.45px;top:151.5px;width:1px;height:475px;background:#d8d8d8"></div>
<div class="a" style="left:216.30px;top:151.5px;width:1px;height:475px;background:#d8d8d8"></div>
<div class="a" style="left:266.15px;top:151.5px;width:1px;height:475px;background:#d8d8d8"></div>
<div class="a" style="left:316.00px;top:151.5px;width:1px;height:475px;background:#d8d8d8"></div>
<div class="a" style="left:365.85px;top:151.5px;width:1px;height:475px;background:#d8d8d8"></div>
<div class="a" style="left:415.70px;top:151.5px;width:1px;height:475px;background:#d8d8d8"></div>
<div class="a" style="left:465.55px;top:151.5px;width:1px;height:475px;background:#d8d8d8"></div>
<div class="a" style="left:515.40px;top:151.5px;width:1px;height:475px;background:#d8d8d8"></div>
<div class="a" style="left:565.25px;top:151.5px;width:1px;height:475px;background:#d8d8d8"></div>
<div class="a" style="left:615.10px;top:151.5px;width:1px;height:475px;background:#d8d8d8"></div>
<div class="a" style="left:664.95px;top:151.5px;width:1px;height:475px;background:#d8d8d8"></div>
<div class="a" style="left:714.80px;top:151.5px;width:1px;height:475px;background:#d8d8d8"></div>
<div class="a" style="left:764.65px;top:151.5px;width:1px;height:475px;background:#d8d8d8"></div>
<div class="a" style="left:814.50px;top:151.5px;width:1px;height:475px;background:#d8d8d8"></div>
<div class="a" style="left:864.35px;top:151.5px;width:1px;height:475px;background:#d8d8d8"></div>
<div class="a" style="left:914.20px;top:151.5px;width:1px;height:475px;background:#d8d8d8"></div>
<div class="a" style="left:0;top:179.76px;width:900px;height:1px;background:#dadada"></div>
<div class="a" style="left:0;top:192.03px;width:900px;height:1px;background:#dadada"></div>
<div class="a" style="left:0;top:204.29px;width:900px;height:1px;background:#dadada"></div>
<div class="a" style="left:0;top:216.56px;width:900px;height:1px;background:#dadada"></div>
<div class="a" style="left:0;top:228.82px;width:900px;height:1px;background:#dadada"></div>
<div class="a" style="left:0;top:241.08px;width:900px;height:1px;background:#dadada"></div>
<div class="a" style="left:0;top:253.35px;width:900px;height:1px;background:#dadada"></div>
<div class="a" style="left:0;top:265.61px;width:900px;height:1px;background:#dadada"></div>
<div class="a" style="left:0;top:277.88px;width:900px;height:1px;background:#dadada"></div>
<div class="a" style="left:0;top:290.14px;width:900px;height:1px;background:#dadada"></div>
<div class="a" style="left:0;top:302.40px;width:900px;height:1px;background:#dadada"></div>
<div class="a" style="left:0;top:314.67px;width:900px;height:1px;background:#dadada"></div>
<div class="a" style="left:0;top:326.93px;width:900px;height:1px;background:#dadada"></div>
<div class="a" style="left:0;top:339.20px;width:900px;height:1px;background:#dadada"></div>
<div class="a" style="left:0;top:351.46px;width:900px;height:1px;background:#dadada"></div>
<div class="a" style="left:0;top:363.72px;width:900px;height:1px;background:#dadada"></div>
<div class="a" style="left:0;top:375.99px;width:900px;height:1px;background:#dadada"></div>
<div class="a" style="left:0;top:388.25px;width:900px;height:1px;background:#dadada"></div>
<div class="a" style="left:0;top:400.52px;width:900px;height:1px;background:#dadada"></div>
<div class="a" style="left:0;top:412.78px;width:900px;height:1px;background:#dadada"></div>
<div class="a" style="left:0;top:425.04px;width:900px;height:1px;background:#dadada"></div>
<div class="a" style="left:0;top:437.31px;width:900px;height:1px;background:#dadada"></div>
<div class="a" style="left:0;top:449.57px;width:900px;height:1px;background:#dadada"></div>
<div class="a" style="left:0;top:461.84px;width:900px;height:1px;background:#dadada"></div>
<div class="a" style="left:0;top:474.10px;width:900px;height:1px;background:#dadada"></div>
<div class="a" style="left:0;top:486.36px;width:900px;height:1px;background:#dadada"></div>
<div class="a" style="left:0;top:498.63px;width:900px;height:1px;background:#dadada"></div>
<div class="a" style="left:0;top:510.89px;width:900px;height:1px;background:#dadada"></div>
<div class="a" style="left:0;top:523.16px;width:900px;height:1px;background:#dadada"></div>
<div class="a" style="left:0;top:535.42px;width:900px;height:1px;background:#dadada"></div>
<div class="a" style="left:0;top:547.68px;width:900px;height:1px;background:#dadada"></div>
<div class="a" style="left:0;top:559.95px;width:900px;height:1px;background:#dadada"></div>
<div class="a" style="left:0;top:572.21px;width:900px;height:1px;background:#dadada"></div>
<div class="a" style="left:0;top:584.48px;width:900px;height:1px;background:#dadada"></div>
<div class="a" style="left:0;top:596.74px;width:900px;height:1px;background:#dadada"></div>
<div class="a" style="left:0;top:609.00px;width:900px;height:1px;background:#dadada"></div>
<div class="a" style="left:0;top:621.27px;width:900px;height:1px;background:#dadada"></div>
<div class="a" style="left:17.9px;top:151.5px;width:48.85px;height:15px;background:#e9e9e9"></div>
<div class="t" style="left:17.40px;width:49.85px;text-align:center;top:156.2px;font-size:8.6px;color:#1e7040">A</div>
<div class="t" style="left:67.25px;width:49.85px;text-align:center;top:156.2px;font-size:8.6px;color:#5a5a5a">B</div>
<div class="t" style="left:117.10px;width:49.85px;text-align:center;top:156.2px;font-size:8.6px;color:#5a5a5a">C</div>
<div class="t" style="left:166.95px;width:49.85px;text-align:center;top:156.2px;font-size:8.6px;color:#5a5a5a">D</div>
<div class="t" style="left:216.80px;width:49.85px;text-align:center;top:156.2px;font-size:8.6px;color:#5a5a5a">E</div>
<div class="t" style="left:266.65px;width:49.85px;text-align:center;top:156.2px;font-size:8.6px;color:#5a5a5a">F</div>
<div class="t" style="left:316.50px;width:49.85px;text-align:center;top:156.2px;font-size:8.6px;color:#5a5a5a">G</div>
<div class="t" style="left:366.35px;width:49.85px;text-align:center;top:156.2px;font-size:8.6px;color:#5a5a5a">H</div>
<div class="t" style="left:416.20px;width:49.85px;text-align:center;top:156.2px;font-size:8.6px;color:#5a5a5a">I</div>
<div class="t" style="left:466.05px;width:49.85px;text-align:center;top:156.2px;font-size:8.6px;color:#5a5a5a">J</div>
<div class="t" style="left:515.90px;width:49.85px;text-align:center;top:156.2px;font-size:8.6px;color:#5a5a5a">K</div>
<div class="t" style="left:565.75px;width:49.85px;text-align:center;top:156.2px;font-size:8.6px;color:#5a5a5a">L</div>
<div class="t" style="left:615.60px;width:49.85px;text-align:center;top:156.2px;font-size:8.6px;color:#5a5a5a">M</div>
<div class="t" style="left:665.45px;width:49.85px;text-align:center;top:156.2px;font-size:8.6px;color:#5a5a5a">N</div>
<div class="t" style="left:715.30px;width:49.85px;text-align:center;top:156.2px;font-size:8.6px;color:#5a5a5a">O</div>
<div class="t" style="left:765.15px;width:49.85px;text-align:center;top:156.2px;font-size:8.6px;color:#5a5a5a">P</div>
<div class="t" style="left:815.00px;width:49.85px;text-align:center;top:156.2px;font-size:8.6px;color:#5a5a5a">Q</div>
<div class="t" style="left:864.85px;width:49.85px;text-align:center;top:156.2px;font-size:8.6px;color:#5a5a5a">R</div>
<svg width="900" height="663" style="left:0;top:0"><path d="M4,165.7 L15.3,155 V165.7 Z" fill="#d6d6d6"/></svg>
<div class="a" style="left:17.4px;top:166.5px;width:49.85px;height:1.6px;background:#1e7040"></div>
<div class="t" style="left:0;width:17.4px;text-align:center;top:169.40px;font-size:9.4px;color:#444;transform:scaleX(0.86);-webkit-text-stroke:0.15px #444">1</div>
<div class="t" style="left:0;width:17.4px;text-align:center;top:181.66px;font-size:9.4px;color:#444;transform:scaleX(0.86);-webkit-text-stroke:0.15px #444">2</div>
<div class="t" style="left:0;width:17.4px;text-align:center;top:193.93px;font-size:9.4px;color:#444;transform:scaleX(0.86);-webkit-text-stroke:0.15px #444">3</div>
<div class="t" style="left:0;width:17.4px;text-align:center;top:206.19px;font-size:9.4px;color:#444;transform:scaleX(0.86);-webkit-text-stroke:0.15px #444">4</div>
<div class="t" style="left:0;width:17.4px;text-align:center;top:218.46px;font-size:9.4px;color:#444;transform:scaleX(0.86);-webkit-text-stroke:0.15px #444">5</div>
<div class="t" style="left:0;width:17.4px;text-align:center;top:230.72px;font-size:9.4px;color:#444;transform:scaleX(0.86);-webkit-text-stroke:0.15px #444">6</div>
<div class="t" style="left:0;width:17.4px;text-align:center;top:242.98px;font-size:9.4px;color:#444;transform:scaleX(0.86);-webkit-text-stroke:0.15px #444">7</div>
<div class="t" style="left:0;width:17.4px;text-align:center;top:255.25px;font-size:9.4px;color:#1e7040;transform:scaleX(0.86);-webkit-text-stroke:0.15px #1e7040">8</div>
<div class="t" style="left:0;width:17.4px;text-align:center;top:267.51px;font-size:9.4px;color:#444;transform:scaleX(0.86);-webkit-text-stroke:0.15px #444">9</div>
<div class="t" style="left:0;width:17.4px;text-align:center;top:279.78px;font-size:9.4px;color:#444;transform:scaleX(0.86);-webkit-text-stroke:0.15px #444">10</div>
<div class="t" style="left:0;width:17.4px;text-align:center;top:292.04px;font-size:9.4px;color:#444;transform:scaleX(0.86);-webkit-text-stroke:0.15px #444">11</div>
<div class="t" style="left:0;width:17.4px;text-align:center;top:304.30px;font-size:9.4px;color:#444;transform:scaleX(0.86);-webkit-text-stroke:0.15px #444">12</div>
<div class="t" style="left:0;width:17.4px;text-align:center;top:316.57px;font-size:9.4px;color:#444;transform:scaleX(0.86);-webkit-text-stroke:0.15px #444">13</div>
<div class="t" style="left:0;width:17.4px;text-align:center;top:328.83px;font-size:9.4px;color:#444;transform:scaleX(0.86);-webkit-text-stroke:0.15px #444">14</div>
<div class="t" style="left:0;width:17.4px;text-align:center;top:341.10px;font-size:9.4px;color:#444;transform:scaleX(0.86);-webkit-text-stroke:0.15px #444">15</div>
<div class="t" style="left:0;width:17.4px;text-align:center;top:353.36px;font-size:9.4px;color:#444;transform:scaleX(0.86);-webkit-text-stroke:0.15px #444">16</div>
<div class="t" style="left:0;width:17.4px;text-align:center;top:365.62px;font-size:9.4px;color:#444;transform:scaleX(0.86);-webkit-text-stroke:0.15px #444">17</div>
<div class="t" style="left:0;width:17.4px;text-align:center;top:377.89px;font-size:9.4px;color:#444;transform:scaleX(0.86);-webkit-text-stroke:0.15px #444">18</div>
<div class="t" style="left:0;width:17.4px;text-align:center;top:390.15px;font-size:9.4px;color:#444;transform:scaleX(0.86);-webkit-text-stroke:0.15px #444">19</div>
<div class="t" style="left:0;width:17.4px;text-align:center;top:402.42px;font-size:9.4px;color:#444;transform:scaleX(0.86);-webkit-text-stroke:0.15px #444">20</div>
<div class="t" style="left:0;width:17.4px;text-align:center;top:414.68px;font-size:9.4px;color:#444;transform:scaleX(0.86);-webkit-text-stroke:0.15px #444">21</div>
<div class="t" style="left:0;width:17.4px;text-align:center;top:426.94px;font-size:9.4px;color:#444;transform:scaleX(0.86);-webkit-text-stroke:0.15px #444">22</div>
<div class="t" style="left:0;width:17.4px;text-align:center;top:439.21px;font-size:9.4px;color:#444;transform:scaleX(0.86);-webkit-text-stroke:0.15px #444">23</div>
<div class="t" style="left:0;width:17.4px;text-align:center;top:451.47px;font-size:9.4px;color:#444;transform:scaleX(0.86);-webkit-text-stroke:0.15px #444">24</div>
<div class="t" style="left:0;width:17.4px;text-align:center;top:463.74px;font-size:9.4px;color:#444;transform:scaleX(0.86);-webkit-text-stroke:0.15px #444">25</div>
<div class="t" style="left:0;width:17.4px;text-align:center;top:476.00px;font-size:9.4px;color:#444;transform:scaleX(0.86);-webkit-text-stroke:0.15px #444">26</div>
<div class="t" style="left:0;width:17.4px;text-align:center;top:488.26px;font-size:9.4px;color:#444;transform:scaleX(0.86);-webkit-text-stroke:0.15px #444">27</div>
<div class="t" style="left:0;width:17.4px;text-align:center;top:500.53px;font-size:9.4px;color:#444;transform:scaleX(0.86);-webkit-text-stroke:0.15px #444">28</div>
<div class="t" style="left:0;width:17.4px;text-align:center;top:512.79px;font-size:9.4px;color:#444;transform:scaleX(0.86);-webkit-text-stroke:0.15px #444">29</div>
<div class="t" style="left:0;width:17.4px;text-align:center;top:525.06px;font-size:9.4px;color:#444;transform:scaleX(0.86);-webkit-text-stroke:0.15px #444">30</div>
<div class="t" style="left:0;width:17.4px;text-align:center;top:537.32px;font-size:9.4px;color:#444;transform:scaleX(0.86);-webkit-text-stroke:0.15px #444">31</div>
<div class="t" style="left:0;width:17.4px;text-align:center;top:549.58px;font-size:9.4px;color:#444;transform:scaleX(0.86);-webkit-text-stroke:0.15px #444">32</div>
<div class="t" style="left:0;width:17.4px;text-align:center;top:561.85px;font-size:9.4px;color:#444;transform:scaleX(0.86);-webkit-text-stroke:0.15px #444">33</div>
<div class="t" style="left:0;width:17.4px;text-align:center;top:574.11px;font-size:9.4px;color:#444;transform:scaleX(0.86);-webkit-text-stroke:0.15px #444">34</div>
<div class="t" style="left:0;width:17.4px;text-align:center;top:586.38px;font-size:9.4px;color:#444;transform:scaleX(0.86);-webkit-text-stroke:0.15px #444">35</div>
<div class="t" style="left:0;width:17.4px;text-align:center;top:598.64px;font-size:9.4px;color:#444;transform:scaleX(0.86);-webkit-text-stroke:0.15px #444">36</div>
<div class="t" style="left:0;width:17.4px;text-align:center;top:610.90px;font-size:9.4px;color:#444;transform:scaleX(0.86);-webkit-text-stroke:0.15px #444">37</div>
<div class="t" style="left:0;width:17.4px;text-align:center;top:623.17px;font-size:9.4px;color:#444;transform:scaleX(0.86);-webkit-text-stroke:0.15px #444">38</div>
<div class="t" style="left:18.00px;top:168.60px;width:48.65px;height:11.06px;overflow:hidden;font-size:8.5px;color:#111;padding-left:1.4px"><span class="cs">Nickname</span></div>
<div class="t" style="left:67.85px;top:168.60px;width:48.65px;height:11.06px;overflow:hidden;font-size:8.5px;color:#111;padding-left:1.4px"><span class="cs">Name</span></div>
<div class="t" style="left:117.70px;top:168.60px;width:48.65px;height:11.06px;overflow:hidden;font-size:8.5px;color:#111;padding-left:1.4px"><span class="cs">E-mail Address</span></div>
<div class="t" style="left:167.55px;top:168.60px;width:48.65px;height:11.06px;overflow:hidden;font-size:8.5px;color:#111;padding-left:1.4px"><span class="cs">Business Street</span></div>
<div class="t" style="left:217.40px;top:168.60px;width:48.65px;height:11.06px;overflow:hidden;font-size:8.5px;color:#111;padding-left:1.4px"><span class="cs">Business City</span></div>
<div class="t" style="left:267.25px;top:168.60px;width:48.65px;height:11.06px;overflow:hidden;font-size:8.5px;color:#111;padding-left:1.4px"><span class="cs">Business Postal Code</span></div>
<div class="t" style="left:317.10px;top:168.60px;width:48.65px;height:11.06px;overflow:hidden;font-size:8.5px;color:#111;padding-left:1.4px"><span class="cs">Business Country</span></div>
<div class="t" style="left:366.95px;top:168.60px;width:48.65px;height:11.06px;overflow:hidden;font-size:8.5px;color:#111;padding-left:1.4px"><span class="cs">Business State</span></div>
<div class="t" style="left:416.80px;top:168.60px;width:48.65px;height:11.06px;overflow:hidden;font-size:8.5px;color:#111;padding-left:1.4px"><span class="cs">Company</span></div>
<div class="t" style="left:466.65px;top:168.60px;width:48.65px;height:11.06px;overflow:hidden;font-size:8.5px;color:#111;padding-left:1.4px"><span class="cs">Job Title</span></div>
<div class="t" style="left:516.50px;top:168.60px;width:48.65px;height:11.06px;overflow:hidden;font-size:8.5px;color:#111;padding-left:1.4px"><span class="cs">Department</span></div>
<div class="t" style="left:566.35px;top:168.60px;width:48.65px;height:11.06px;overflow:hidden;font-size:8.5px;color:#111;padding-left:1.4px"><span class="cs">Business Phone</span></div>
<div class="t" style="left:616.20px;top:168.60px;width:48.65px;height:11.06px;overflow:hidden;font-size:8.5px;color:#111;padding-left:1.4px"><span class="cs">Company Main Phone</span></div>
<div class="t" style="left:666.05px;top:168.60px;width:48.65px;height:11.06px;overflow:hidden;font-size:8.5px;color:#111;padding-left:1.4px"><span class="cs">Business Fax</span></div>
<div class="t" style="left:715.90px;top:168.60px;width:48.65px;height:11.06px;overflow:hidden;font-size:8.5px;color:#111;padding-left:1.4px"><span class="cs">Home Fax</span></div>
<div class="t" style="left:765.75px;top:168.60px;width:48.65px;height:11.06px;overflow:hidden;font-size:8.5px;color:#111;padding-left:1.4px"><span class="cs">Mobile Phone</span></div>
<div class="t" style="left:815.60px;top:168.60px;width:48.65px;height:11.06px;overflow:hidden;font-size:8.5px;color:#111;padding-left:1.4px"><span class="cs">Pager</span></div>
<div class="t" style="left:865.45px;top:168.60px;width:48.65px;height:11.06px;overflow:hidden;font-size:8.5px;color:#111;padding-left:1.4px"><span class="cs">Web Page</span></div>
<div class="t" style="left:18.00px;top:180.86px;width:48.65px;height:11.06px;overflow:hidden;font-size:8.5px;color:#111;padding-left:1.4px"><span class="cs">kelly</span></div>
<div class="t" style="left:67.85px;top:180.86px;width:48.65px;height:11.06px;overflow:hidden;font-size:8.5px;color:#111;padding-left:1.4px"><span class="cs">Kelly Chan</span></div>
<div class="t" style="left:117.70px;top:180.86px;width:447.45px;height:11.06px;overflow:hidden;font-size:8.5px;color:#111;padding-left:1.4px"><span class="cs">kelly@company123.com</span></div>
<div class="t" style="left:566.35px;top:180.86px;width:198.20px;height:11.06px;overflow:hidden;font-size:8.5px;color:#111;padding-left:1.4px"><span class="cs">03-77889911</span></div>
<div class="t" style="left:765.75px;top:180.86px;width:148.35px;height:11.06px;overflow:hidden;font-size:8.5px;color:#111;padding-left:1.4px"><span class="cs">012-3456789</span></div>
<div class="t" style="left:18.00px;top:193.13px;width:48.65px;height:11.06px;overflow:hidden;font-size:8.5px;color:#111;padding-left:1.4px"><span class="cs">ahmad</span></div>
<div class="t" style="left:67.85px;top:193.13px;width:48.65px;height:11.06px;overflow:hidden;font-size:8.5px;color:#111;padding-left:1.4px"><span class="cs">Ahmad Yusof</span></div>
<div class="t" style="left:117.70px;top:193.13px;width:646.85px;height:11.06px;overflow:hidden;font-size:8.5px;color:#111;padding-left:1.4px"><span class="cs">ahmad.yusof@aoc.my</span></div>
<div class="t" style="left:765.75px;top:193.13px;width:148.35px;height:11.06px;overflow:hidden;font-size:8.5px;color:#111;padding-left:1.4px"><span class="cs">03-98765432</span></div>
<div class="t" style="left:18.00px;top:205.39px;width:48.65px;height:11.06px;overflow:hidden;font-size:8.5px;color:#111;padding-left:1.4px"><span class="cs">david</span></div>
<div class="t" style="left:67.85px;top:205.39px;width:48.65px;height:11.06px;overflow:hidden;font-size:8.5px;color:#111;padding-left:1.4px"><span class="cs">David Lee</span></div>
<div class="t" style="left:117.70px;top:205.39px;width:796.40px;height:11.06px;overflow:hidden;font-size:8.5px;color:#111;padding-left:1.4px"><span class="cs">davidlee@gmail.com</span></div>
<div class="t" style="left:18.00px;top:217.66px;width:48.65px;height:11.06px;overflow:hidden;font-size:8.5px;color:#111;padding-left:1.4px"><span class="cs">amanda</span></div>
<div class="t" style="left:67.85px;top:217.66px;width:48.65px;height:11.06px;overflow:hidden;font-size:8.5px;color:#111;padding-left:1.4px"><span class="cs">Amanda Tan</span></div>
<div class="t" style="left:117.70px;top:217.66px;width:646.85px;height:11.06px;overflow:hidden;font-size:8.5px;color:#111;padding-left:1.4px"><span class="cs">amandatan@lookafter.my</span></div>
<div class="t" style="left:765.75px;top:217.66px;width:148.35px;height:11.06px;overflow:hidden;font-size:8.5px;color:#111;padding-left:1.4px"><span class="cs">019-5678912</span></div>
<div class="t" style="left:18.00px;top:229.92px;width:48.65px;height:11.06px;overflow:hidden;font-size:8.5px;color:#111;padding-left:1.4px"><span class="cs">syikin</span></div>
<div class="t" style="left:67.85px;top:229.92px;width:48.65px;height:11.06px;overflow:hidden;font-size:8.5px;color:#111;padding-left:1.4px"><span class="cs">Norasyikin</span></div>
<div class="t" style="left:117.70px;top:229.92px;width:796.40px;height:11.06px;overflow:hidden;font-size:8.5px;color:#111;padding-left:1.4px"><span class="cs">norasyikin@mymail.com</span></div>
<div class="a" style="left:0;top:254.35px;width:17px;height:11.26px;background:#e6e6e6"></div>
<div class="t" style="left:0;width:17.4px;text-align:center;top:255.25px;font-size:9.4px;color:#1e7040;transform:scaleX(0.86);-webkit-text-stroke:0.15px #1e7040">8</div>
<div class="a" style="left:16.3px;top:252.95px;width:51.9px;height:14.06px;border:1.7px solid #1d6b3a"></div>
<div class="a" style="left:64.8px;top:264.21px;width:4.6px;height:4.6px;background:#fff"></div>
<div class="a" style="left:65.4px;top:264.81px;width:3.7px;height:3.7px;background:#1d6b3a"></div>
<div class="a" style="left:0;top:626px;width:900px;height:20px;background:#ececec;border-top:1px solid #d9d9d9"></div>
<div class="a" style="left:46.3px;top:626px;width:109px;height:17.6px;background:#fff;border:1px solid #cbcbcb;border-top:none;border-radius:0 0 2.5px 2.5px"></div>
<div class="t" style="left:61px;top:631.9px;font-size:9.2px;color:#1e7040;font-weight:bold;">VO-Address-Book</div>
<div class="a" style="left:184px;top:627px;width:1px;height:15.6px;background:#cfcfcf"></div>
<svg width="900" height="663" style="left:0;top:0"><path d="M11.7,636.6 L17,633 V640.3 Z M34.7,636.6 L29.4,633 V640.3 Z" fill="#b3b3b3"/><path d="M166.3,636 H174.1 M170.2,632 V639.9" stroke="#444" stroke-width="1.3"/></svg>
<div class="a" style="left:0;top:645.5px;width:900px;height:17.5px;background:linear-gradient(#e3e3e3,#d5d5d5);border-top:1px solid #acacac"></div>
<div class="t" style="left:18.9px;top:650.8px;font-size:9.0px;color:#505050;font-weight:normal;">Ready</div>
<div class="a" style="left:656.2px;top:646.5px;width:27.7px;height:16.5px;background:#a0a0a0"></div>
<svg width="900" height="663" style="left:0;top:0"><circle cx="62.8" cy="650.9" r="1.15" fill="#3a3a3a"/><path d="M62.8,651.5 V658.8 M61.3,659 H70.4 M70.4,659 V650.6 H72.8" stroke="#3a3a3a" stroke-width="0.9" fill="none"/><rect x="664.9" y="649.8" width="10.2" height="10.4" fill="#fff"/><rect x="666.00" y="650.90" width="1.9" height="1.9" fill="#707070"/><rect x="666.00" y="653.95" width="1.9" height="1.9" fill="#707070"/><rect x="666.00" y="657.00" width="1.9" height="1.9" fill="#707070"/><rect x="669.05" y="650.90" width="1.9" height="1.9" fill="#707070"/><rect x="669.05" y="653.95" width="1.9" height="1.9" fill="#707070"/><rect x="669.05" y="657.00" width="1.9" height="1.9" fill="#707070"/><rect x="672.10" y="650.90" width="1.9" height="1.9" fill="#707070"/><rect x="672.10" y="653.95" width="1.9" height="1.9" fill="#707070"/><rect x="672.10" y="657.00" width="1.9" height="1.9" fill="#707070"/><rect x="692.6" y="650.6" width="9.8" height="8.8" fill="#eaeaea" stroke="#5a5a5a" stroke-width="0.9"/><path d="M694.6,651.6 V658.4 M700.4,651.6 V658.4 M695.6,653.6 H699.4 M695.6,655.2 H699.4 M695.6,656.8 H699.4" stroke="#777" stroke-width="0.6"/><rect x="720.4" y="650.6" width="9.4" height="8.8" fill="none" stroke="#5a5a5a" stroke-width="0.9"/><path d="M720.4,655.2 H726.2 V650.6 M723.4,650.6 V655.2" stroke="#5a5a5a" stroke-width="0.8" fill="none"/><path d="M745,655.1 H751.1" stroke="#555" stroke-width="1.2"/><path d="M758.2,655.5 H831" stroke="#9a9a9a" stroke-width="2.2" stroke-linecap="round"/><circle cx="794.7" cy="655.4" r="4.4" fill="#fff" stroke="#c8c8c8" stroke-width="0.4"/><path d="M838.7,655.3 H845 M841.85,652.2 V658.4" stroke="#555" stroke-width="1.2"/><rect x="898.8" y="661.4" width="1.2" height="1.6" fill="#333"/></svg>
<div class="t" style="left:857.8px;top:651.2px;font-size:9.4px;color:#505050;font-weight:normal;">100%</div>
</body></html>
